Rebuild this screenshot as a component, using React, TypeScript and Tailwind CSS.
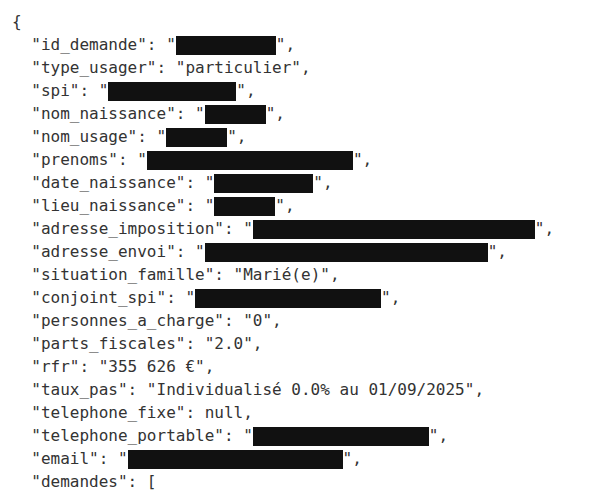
const Bar = ({ w }: { w: number }) => (
  <span className="inline-block h-[19px] bg-[#111111] align-[-5px]" style={{ width: w }} />
);

type Row = { k: string; v?: string; bar?: number; raw?: string };

const rows: Row[] = [
  { k: "id_demande", bar: 100 },
  { k: "type_usager", v: "particulier" },
  { k: "spi", bar: 128 },
  { k: "nom_naissance", bar: 61 },
  { k: "nom_usage", bar: 61 },
  { k: "prenoms", bar: 206 },
  { k: "date_naissance", bar: 99 },
  { k: "lieu_naissance", bar: 61 },
  { k: "adresse_imposition", bar: 282 },
  { k: "adresse_envoi", bar: 283 },
  { k: "situation_famille", v: "Marié(e)" },
  { k: "conjoint_spi", bar: 186 },
  { k: "personnes_a_charge", v: "0" },
  { k: "parts_fiscales", v: "2.0" },
  { k: "rfr", v: "355 626 €" },
  { k: "taux_pas", v: "Individualisé 0.0% au 01/09/2025" },
  { k: "telephone_fixe", raw: "null" },
  { k: "telephone_portable", bar: 176 },
  { k: "email", bar: 215 },
];

export default function App() {
  return (
    <div className="w-[604px] h-[498px] overflow-hidden bg-white pl-[12px] pt-[10px] text-[16px] leading-[23px] text-[#333333] [font-family:'DejaVu_Sans_Mono',monospace] whitespace-pre">
      <div>{"{"}</div>
      {rows.map((r) => (
        <div key={r.k}>
          {`  "${r.k}": `}
          {r.raw ? (
            `${r.raw},`
          ) : r.bar ? (
            <>
              {'"'}
              <Bar w={r.bar} />
              {'",'}
            </>
          ) : (
            `"${r.v}",`
          )}
        </div>
      ))}
      <div>{'  "demandes": ['}</div>
    </div>
  );
}
